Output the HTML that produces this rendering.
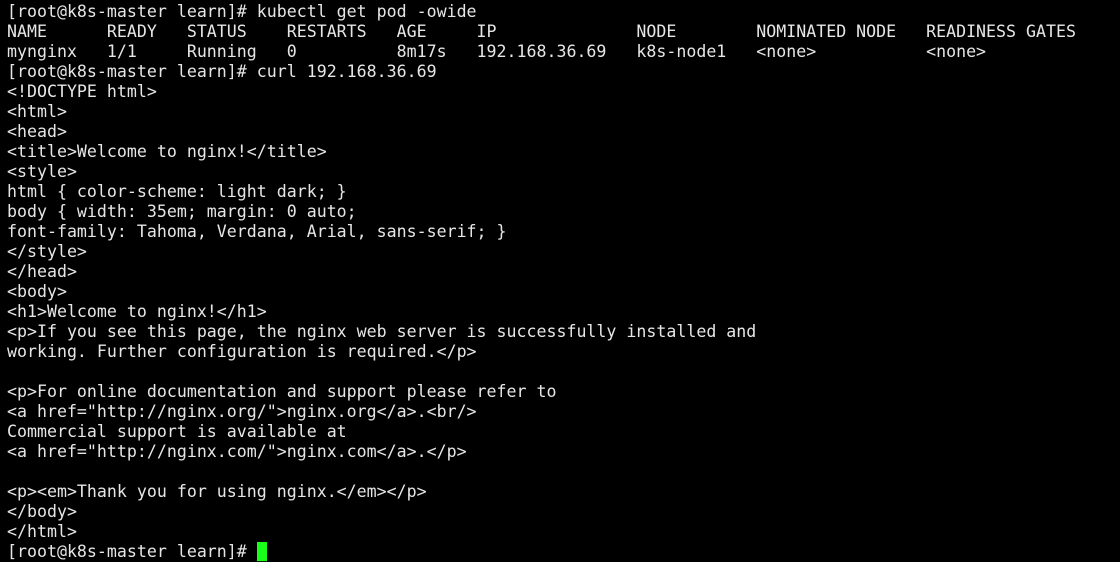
<!DOCTYPE html>
<html><head><style>
html,body{margin:0;padding:0;background:#000;width:1120px;height:547px;overflow:hidden}
pre{margin:0;position:absolute;left:7px;top:2px;font-family:"DejaVu Sans Mono","Liberation Mono",monospace;font-size:16.6px;line-height:20px;color:#e6e6e6;white-space:pre}
.c{background:#1aff1a;color:#1aff1a}
</style></head><body><pre>[root@k8s-master learn]# kubectl get pod -owide
NAME      READY   STATUS    RESTARTS   AGE     IP              NODE        NOMINATED NODE   READINESS GATES
mynginx   1/1     Running   0          8m17s   192.168.36.69   k8s-node1   &lt;none&gt;           &lt;none&gt;
[root@k8s-master learn]# curl 192.168.36.69
&lt;!DOCTYPE html&gt;
&lt;html&gt;
&lt;head&gt;
&lt;title&gt;Welcome to nginx!&lt;/title&gt;
&lt;style&gt;
html { color-scheme: light dark; }
body { width: 35em; margin: 0 auto;
font-family: Tahoma, Verdana, Arial, sans-serif; }
&lt;/style&gt;
&lt;/head&gt;
&lt;body&gt;
&lt;h1&gt;Welcome to nginx!&lt;/h1&gt;
&lt;p&gt;If you see this page, the nginx web server is successfully installed and
working. Further configuration is required.&lt;/p&gt;

&lt;p&gt;For online documentation and support please refer to
&lt;a href="http://nginx.org/"&gt;nginx.org&lt;/a&gt;.&lt;br/&gt;
Commercial support is available at
&lt;a href="http://nginx.com/"&gt;nginx.com&lt;/a&gt;.&lt;/p&gt;

&lt;p&gt;&lt;em&gt;Thank you for using nginx.&lt;/em&gt;&lt;/p&gt;
&lt;/body&gt;
&lt;/html&gt;
[root@k8s-master learn]# <span class="c">_</span></pre></body></html>
